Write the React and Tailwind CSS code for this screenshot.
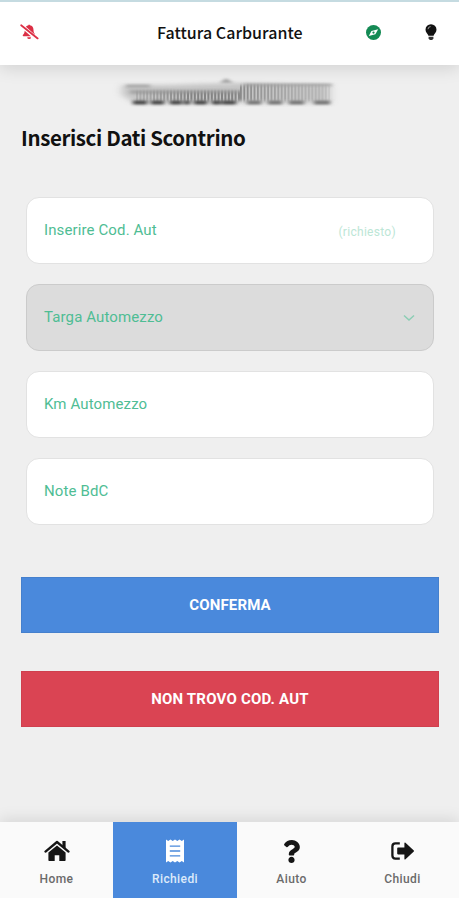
import { FaQuestion } from "react-icons/fa";

const BellOffIcon = ({ className }) => (
  <svg viewBox="0 0 20 16" className={className}>
    <path d="M6.2 2.6C7 1.6 8 1.2 8.9 1V0.3H10.4V1C13 1.5 14.2 3.4 14.2 5.8C14.2 8.2 15 9.4 15.8 10.4V11Z" fill="currentColor" />
    <path d="M4.9 6.6L11.4 12.4H3.6C2.8 12.4 2.6 11.5 3.1 11C4 10 4.9 9 4.9 6.6Z" fill="currentColor" />
    <path d="M7.6 13.4H11.6A2 2 0 0 1 7.6 13.4Z" fill="currentColor" />
    <path d="M1.6 2.1L18.8 15.9" stroke="#fff" strokeWidth="1.1" />
    <path d="M1.2 0.9L18.6 14.8" stroke="currentColor" strokeWidth="1.8" strokeLinecap="round" />
  </svg>
);

const CompassIcon = ({ className }) => (
  <svg viewBox="0 0 16 16" className={className}>
    <circle cx="8" cy="8" r="8" fill="currentColor" />
    <path d="M13 4.5L10 9.9L3 11.7L5.8 6.4Z" fill="#fff" />
    <circle cx="8" cy="8.1" r="1.2" fill="currentColor" />
  </svg>
);

const BulbIcon = ({ className }) => (
  <svg viewBox="0 0 12 17" className={className}>
    <path d="M6 0.2A5.5 5.5 0 0 0 0.5 5.7C0.5 8.4 2.8 9.4 3.4 11.7H8.6C9.2 9.4 11.5 8.4 11.5 5.7A5.5 5.5 0 0 0 6 0.2Z" fill="currentColor" />
    <path d="M3.6 12.7H8.4V14.4L7.2 16H4.8L3.6 14.4Z" fill="currentColor" opacity="0.85" />
    <path d="M3 5.2A2.7 2.7 0 0 1 5.6 2.6" fill="none" stroke="#aaa" strokeWidth="0.9" />
  </svg>
);

const HomeIcon = ({ className }) => (
  <svg viewBox="0 0 26 22" className={className}>
    <path d="M18.4 1H21.6V8.5L18.4 5.7Z" fill="currentColor" />
    <path d="M1.5 11.6L13 2L24.5 11.6" fill="none" stroke="currentColor" strokeWidth="2.3" strokeLinecap="round" strokeLinejoin="round" />
    <path d="M4.4 12.6L13 5.5L21.6 12.6V20.2Q21.6 21 20.8 21H15.3V15.2H10.7V21H5.2Q4.4 21 4.4 20.2Z" fill="currentColor" />
  </svg>
);

const ReceiptIcon = ({ className }) => (
  <svg viewBox="0 0 18 24" className={className}>
    <path
      d="M0 0.5L2.2 2L4.5 0.4L6.7 2L9 0.4L11.3 2L13.5 0.4L15.8 2L18 0.5V23.5L15.8 22L13.5 23.6L11.3 22L9 23.6L6.7 22L4.5 23.6L2.2 22L0 23.5Z"
      fill="currentColor"
    />
    <path d="M3.8 7.2H14.2M3.8 12H14.2M3.8 16.8H14.2" stroke="#4a89dc" strokeWidth="1.3" />
  </svg>
);

const ExitIcon = ({ className }) => (
  <svg viewBox="0 0 24 18" className={className}>
    <path d="M8.8 1.4H4.4Q1.4 1.4 1.4 4.4V13.6Q1.4 16.6 4.4 16.6H8.8" fill="none" stroke="currentColor" strokeWidth="2.3" />
    <path d="M7 5.6H13.4V1.1Q13.6 0.2 14.5 0.8L22.8 8.4Q23.4 9 22.8 9.6L14.5 17.2Q13.6 17.8 13.4 16.9V12.4H7Q6.2 12.4 6.2 11.6V6.4Q6.2 5.6 7 5.6Z" fill="currentColor" />
  </svg>
);

const fields = [
  { id: 'codice', label: 'Inserire Cod. Aut', required: true },
  { id: 'targa', label: 'Targa Automezzo', select: true },
  { id: 'km', label: 'Km Automezzo' },
  { id: 'note', label: 'Note BdC' },
];

const tabs = [
  { label: 'Home', icon: HomeIcon, width: 'w-[113px]', size: 'h-[22px] w-[26px]' },
  { label: 'Richiedi', icon: ReceiptIcon, width: 'w-[124px]', size: 'h-6 w-[18px]', active: true },
  { label: 'Aiuto', icon: FaQuestion, width: 'w-[109px]', size: 'size-[23px]' },
  { label: 'Chiudi', icon: ExitIcon, width: 'w-[113px]', size: 'h-[18px] w-6' },
];

// Company name, smudged out
const HiddenName = () => (
  <svg width="240" height="45" viewBox="0 0 240 45" className="block" aria-hidden="true">
    <defs>
      <filter id="soft" filterUnits="userSpaceOnUse" x="0" y="0" width="240" height="45">
        <feGaussianBlur stdDeviation="2.2 0.9" />
      </filter>
      <filter id="softer" filterUnits="userSpaceOnUse" x="0" y="0" width="240" height="45">
        <feGaussianBlur stdDeviation="4 2" />
      </filter>
      <filter id="grain" filterUnits="userSpaceOnUse" x="0" y="0" width="240" height="45">
        <feGaussianBlur stdDeviation="0.4 1.6" />
      </filter>
      <linearGradient id="fade" gradientUnits="userSpaceOnUse" x1="20" y1="0" x2="222" y2="0">
        <stop offset="0" stopColor="#777" stopOpacity="0.2" />
        <stop offset="0.3" stopColor="#6c6c6c" stopOpacity="0.75" />
        <stop offset="0.5" stopColor="#6c6c6c" stopOpacity="0.75" />
        <stop offset="1" stopColor="#999" stopOpacity="0.2" />
      </linearGradient>
    </defs>
    <path d="M12 15h45l30-1 43-1 90 2v18H25l-13-8z" fill="#bababa" opacity="0.8" filter="url(#softer)" />
    <path d="M16 16h24M134 15h88" stroke="#8d8d8d" strokeWidth="3" opacity="0.6" filter="url(#soft)" />
    <path d="M110 13l6-5 7 5z" fill="#a5a5a5" filter="url(#soft)" />
    <path d="M26 26H130" stroke="url(#fade)" strokeWidth="9" strokeDasharray="2 1.4" filter="url(#grain)" />
    <path d="M130 23H220" stroke="url(#fade)" strokeWidth="15" strokeDasharray="1.8 1.6" filter="url(#grain)" />
    <path d="M20 22H130" stroke="#8a8a8a" strokeWidth="4" opacity="0.5" filter="url(#soft)" />
    <path
      d="M23 32.5h14M41 32.5h13M60 32.5h12M74 32.5h6M84 32.5h13M102 32.5h9M112 32.5h14"
      stroke="#3a3a3a"
      strokeWidth="4"
      opacity="0.9"
      filter="url(#soft)"
    />
    <path d="M137 32.5h14M158 32.5h14M179 32.5h15M204 32.5h16" stroke="#777" strokeWidth="4" filter="url(#soft)" />
  </svg>
);

const Field = ({ label, required, select }) => (
  <div
    className={`flex h-[67px] items-center justify-between rounded-[13px] border pl-[17px] ${
      select ? 'border-[#cbcbcb] bg-[#dcdcdc]' : 'border-[#e2e2e2] bg-white'
    }`}
  >
    <span className="text-[15px] tracking-[0.12px] text-[#4fbd94]">{label}</span>
    {required && (
      <span className="mr-[37px] pt-0.5 text-[12px] tracking-[0.3px] text-[#bce6d6]">(richiesto)</span>
    )}
    {select && (
      <svg width="12" height="8" viewBox="0 0 12 8" className="mr-[18px] text-[#8ccdb4]">
        <path d="M1 1.5L6 6L11 1.5" fill="none" stroke="currentColor" strokeWidth="1.5" />
      </svg>
    )}
  </div>
);

const Header = () => (
  <header className="relative flex h-[65px] items-center border-t-2 border-[#c5dbe1] bg-white pb-[3px] shadow-[0_3px_16px_rgba(0,0,0,0.13)]">
    <BellOffIcon className="ml-5 h-4 w-[19px] text-[#dc2f45]" />
    <h1 className="ml-[118px] flex-1 whitespace-nowrap font-['Noto_Sans_CJK_SC',sans-serif] text-[16px] leading-6 font-medium tracking-[0.04px] text-[#111]">
      Fattura Carburante
    </h1>
    <CompassIcon className="mr-[44px] size-[15px] text-[#148a54]" />
    <BulbIcon className="mr-[22px] h-[17px] w-3 text-[#111]" />
  </header>
);

const BottomNav = () => (
  <nav className="flex h-[78px] border-b-2 border-white bg-[#fafafa] shadow-[0_-3px_14px_rgba(0,0,0,0.1)]">
    {tabs.map(({ label, icon: Icon, width, size, active }) => (
      <button
        key={label}
        className={`flex flex-col items-center pt-4 ${width} ${
          active ? 'bg-[#4a89dc] text-white' : 'text-[#151515]'
        }`}
      >
        <span className="flex h-[26px] items-center">
          <Icon className={size} />
        </span>
        <span
          className={`mt-1.5 text-[12px] leading-[18px] font-medium tracking-[0.4px] ${
            active ? 'text-[#dce9fa]' : 'text-[#6a6a6a]'
          }`}
        >
          {label}
        </span>
      </button>
    ))}
  </nav>
);

export default function App() {
  return (
    <div className="flex h-[900px] w-[459px] flex-col overflow-hidden bg-[#efefef] font-[Roboto,sans-serif]">
      <Header />
      <main className="flex flex-1 flex-col">
        <div className="mt-[5px] flex justify-center">
          <HiddenName />
        </div>
        <h2 className="mt-[7px] ml-[21px] font-['Noto_Sans_CJK_SC',sans-serif] text-[20.5px] leading-[30px] font-bold tracking-[-0.38px] text-[#111]">
          Inserisci Dati Scontrino
        </h2>
        <div className="mt-[45px] mr-[25px] ml-[26px] flex flex-col gap-5">
          {fields.map((field) => (
            <Field key={field.id} {...field} />
          ))}
        </div>
        <div className="mt-[52px] mr-5 ml-[21px] flex flex-col gap-[38px]">
          <button className="h-14 border border-[#4580cd] bg-[#4a89dc] text-[15px] font-bold tracking-[0.15px] text-white">
            CONFERMA
          </button>
          <button className="h-14 border border-[#cf404e] bg-[#da4453] text-[15px] font-bold tracking-[0.2px] text-white">
            NON TROVO COD. AUT
          </button>
        </div>
      </main>
      <BottomNav />
    </div>
  );
}
